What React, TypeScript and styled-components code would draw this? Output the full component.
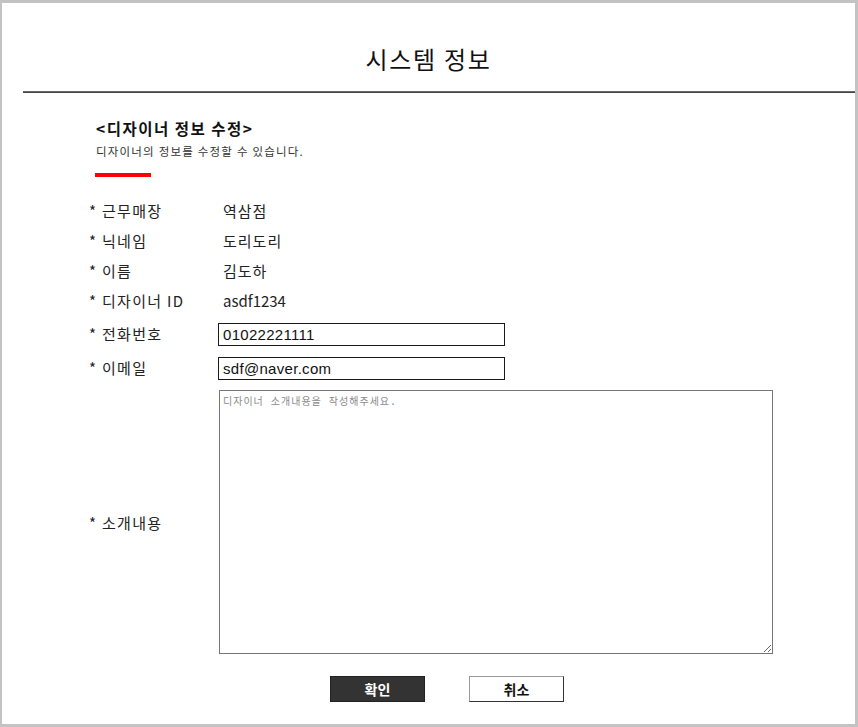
import React from "react";
import styled, { createGlobalStyle } from "styled-components";

const Global = createGlobalStyle`
  html, body { margin: 0; padding: 0; background: #fff; }
  body { font-family: "Noto Sans CJK KR", "Noto Sans", sans-serif; color: #222; }
  * { box-sizing: border-box; }
`;

const Frame = styled.div`
  width: 858px;
  height: 727px;
  border: 3px solid #c3c3c3;
  border-left-width: 2px;
  background: #fff;
  overflow: hidden;
`;

const Title = styled.h1`
  margin: 0;
  padding-top: 41px;
  line-height: 30px;
  font-size: 24px;
  font-weight: 400;
  letter-spacing: 1.7px;
  text-align: center;
  color: #111;
`;

const Rule = styled.hr`
  margin: 17px 0 0 21px;
  height: 0;
  border: 0;
  border-top: 1px solid #6a6a6a;
  border-bottom: 1px solid #444;
`;

const Intro = styled.section`
  padding-left: 94px;
  padding-top: 25px;
`;

const Heading = styled.h2`
  margin: 0;
  font-size: 15.5px;
  line-height: 20px;
  font-weight: 700;
  letter-spacing: 1.5px;
  color: #111;
`;

const Sub = styled.p`
  margin: 5px 0 0;
  font-size: 11.5px;
  line-height: 16px;
  letter-spacing: 1.2px;
  color: #333;
`;

const RedBar = styled.div`
  margin: 14px 0 0 -1px;
  width: 56px;
  height: 4px;
  background: #f00;
`;

const Form = styled.form`
  margin: 18px 0 0 87px;
  width: 716px;
`;

const Row = styled.div<{ $h: number; $mt?: number }>`
  display: grid;
  grid-template-columns: 129px 1fr;
  align-items: center;
  height: ${(p) => p.$h}px;
  margin-top: ${(p) => p.$mt ?? 0}px;
`;

const Label = styled.div`
  font-size: 15px;
  letter-spacing: 1.3px;
  color: #222;
  white-space: nowrap;
`;

const Value = styled.div<{ $latin?: boolean }>`
  font-size: 15px;
  letter-spacing: ${(p) => (p.$latin ? "0" : "1px")};
  color: #222;
  padding-left: 5px;
`;

const TextInput = styled.input`
  width: 287px;
  height: 23px;
  border: 1px solid #1a1a1a;
  padding: 0 4px;
  font-family: "Liberation Sans", Arial, sans-serif;
  font-size: 15px;
  letter-spacing: 0.3px;
  color: #111;
  outline: none;
`;

const Intro2 = styled.textarea`
  margin-left: 1px;
  width: 554px;
  height: 264px;
  border: 1px solid #767676;
  padding: 2px 3px;
  font-family: "DejaVu Sans Mono", "Noto Sans CJK KR", monospace;
  font-size: 10px;
  letter-spacing: 1px;
  resize: both;
  outline: none;
  &::placeholder { color: #8a8a8a; }
`;

const Buttons = styled.div`
  display: flex;
  justify-content: center;
  gap: 44px;
  margin-top: 22px;
`;

const Btn = styled.button<{ $primary?: boolean }>`
  width: 95px;
  height: 26px;
  font-family: "Noto Sans CJK KR", sans-serif;
  font-size: 14px;
  font-weight: 700;
  padding: 0;
  cursor: pointer;
  background: ${(p) => (p.$primary ? "#333" : "#fff")};
  color: ${(p) => (p.$primary ? "#fff" : "#111")};
  border: 1px solid ${(p) => (p.$primary ? "#222" : "#333")};
  border-left-color: ${(p) => (p.$primary ? "#222" : "#999")};
  border-top-color: ${(p) => (p.$primary ? "#222" : "#999")};
`;

export default function App() {
  return (
    <>
      <Global />
      <Frame>
        <Title>시스템 정보</Title>
        <Rule />
        <Intro>
          <Heading>&lt;디자이너 정보 수정&gt;</Heading>
          <Sub>디자이너의 정보를 수정할 수 있습니다.</Sub>
          <RedBar />
        </Intro>
        <Form onSubmit={(e) => e.preventDefault()}>
          <Row $h={30}>
            <Label>* 근무매장</Label>
            <Value>역삼점</Value>
          </Row>
          <Row $h={30}>
            <Label>* 닉네임</Label>
            <Value>도리도리</Value>
          </Row>
          <Row $h={30}>
            <Label>* 이름</Label>
            <Value>김도하</Value>
          </Row>
          <Row $h={31}>
            <Label>* 디자이너 ID</Label>
            <Value $latin>asdf1234</Value>
          </Row>
          <Row $h={34}>
            <Label>* 전화번호</Label>
            <div>
              <TextInput defaultValue="01022221111" />
            </div>
          </Row>
          <Row $h={34}>
            <Label>* 이메일</Label>
            <div>
              <TextInput defaultValue="sdf@naver.com" />
            </div>
          </Row>
          <Row $h={264} $mt={6}>
            <Label>* 소개내용</Label>
            <Intro2 placeholder="디자이너 소개내용을 작성해주세요." />
          </Row>
          <Buttons>
            <Btn type="button" $primary>확인</Btn>
            <Btn type="button">취소</Btn>
          </Buttons>
        </Form>
      </Frame>
    </>
  );
}
